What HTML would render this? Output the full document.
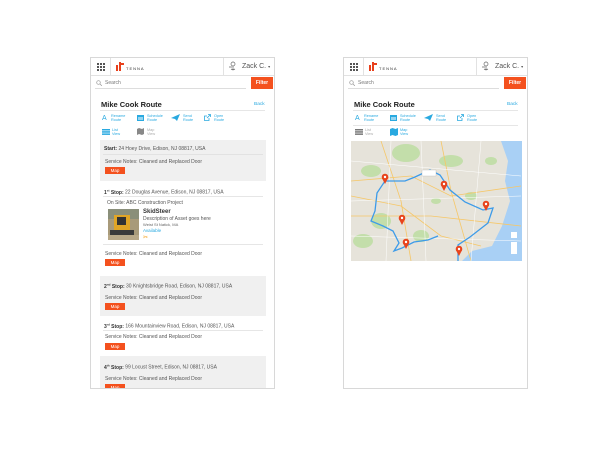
<!DOCTYPE html><html><head><style>
*{margin:0;padding:0;box-sizing:border-box}
body{width:600px;height:450px;background:#fff;position:relative;overflow:hidden;font-family:"Liberation Sans",sans-serif;color:#444}
.ph{position:absolute;top:57px;width:185px;height:332px;border:1px solid #d8d8d8;overflow:hidden;background:#fff}
.a{position:absolute;white-space:nowrap}
.hd{position:absolute;left:0;top:0;width:183px;height:18px;border-bottom:1px solid #e2e2e2}
.vl{position:absolute;top:0;width:1px;height:18px;background:#e2e2e2}
.t{font-size:5px;color:#555}
.b{font-weight:bold;color:#333}
.btn{position:absolute;width:20px;height:7px;background:#f4511e;color:#fff;font-size:4.5px;text-align:center;line-height:7px}
.gb{position:absolute;background:#f0f0f0}
.ln{position:absolute;height:1px;background:#e6e6e6}
.ic{position:absolute;font-size:3.8px;color:#29a9e0;line-height:4.3px}
</style></head><body>

<!-- LEFT -->
<div class="ph" style="left:90px">
 <div class="hd">
  <svg class="a" style="left:6px;top:5px" width="8" height="8"><g fill="#555"><rect x="0" y="0" width="2" height="2"/><rect x="3" y="0" width="2" height="2"/><rect x="6" y="0" width="2" height="2"/><rect x="0" y="3" width="2" height="2"/><rect x="3" y="3" width="2" height="2"/><rect x="6" y="3" width="2" height="2"/><rect x="0" y="6" width="2" height="2"/><rect x="3" y="6" width="2" height="2"/><rect x="6" y="6" width="2" height="2"/></g></svg>
  <div class="vl" style="left:19px"></div>
  <svg class="a" style="left:25px;top:4px" width="9" height="9"><rect x="0" y="3" width="2" height="6" fill="#e8401c"/><path d="M3 0h2v9h-2z" fill="#e8401c"/><path d="M5 1h3v2h-3z" fill="#e8401c"/></svg>
  <div class="a" style="left:35px;top:8px;font-size:4px;letter-spacing:1px;color:#333">TENNA</div>
  <div class="vl" style="left:132px"></div>
  <svg class="a" style="left:137px;top:3px" width="9" height="11"><circle cx="5" cy="3" r="2" fill="none" stroke="#666" stroke-width=".7"/><path d="M5 5v4M3 8l2 1 2-1M1 6h3" stroke="#666" stroke-width=".7" fill="none"/></svg>
  <div class="a" style="left:151px;top:5px;font-size:7px;color:#555">Zack C. <span style="font-size:4px">▾</span></div>
 </div>
 <svg class="a" style="left:5px;top:22px" width="6" height="6"><circle cx="2.5" cy="2.5" r="1.8" fill="none" stroke="#999" stroke-width=".7"/><path d="M4 4l2 2" stroke="#999" stroke-width=".7"/></svg>
 <div class="a t" style="left:14px;top:22px;color:#777">Search</div>
 <div class="ln" style="left:4px;top:30px;width:151px;background:#ddd"></div>
 <div class="a" style="left:160px;top:19px;width:22px;height:12px;background:#f4511e;color:#fff;font-size:5px;font-weight:bold;text-align:center;line-height:12px">Filter</div>

 <div class="a" style="left:10px;top:42px;font-size:7.5px;font-weight:bold;color:#222">Mike Cook Route</div>
 <div class="a" style="left:163px;top:44px;font-size:4.8px;color:#29a9e0">Back</div>
 <div class="ln" style="left:9px;top:52px;width:165px"></div>
 <div class="a" style="left:11px;top:57px;font-size:7px;color:#29a9e0">A</div><div class="ic" style="left:20px;top:56px">Rename<br>Route</div>
 <svg class="a" style="left:46px;top:56px" width="7" height="7"><rect x="0" y="1" width="7" height="6" fill="#29a9e0"/><rect x="1" y="3" width="5" height="3" fill="#fff" opacity=".5"/></svg><div class="ic" style="left:56px;top:56px">Schedule<br>Route</div>
 <svg class="a" style="left:80px;top:56px" width="9" height="7"><path d="M0 4l9-4-3 7-2-2z" fill="#29a9e0"/></svg><div class="ic" style="left:92px;top:56px">Send<br>Route</div>
 <svg class="a" style="left:113px;top:56px" width="7" height="7"><path d="M4 .5h2.5V3M6.5.5L3 4M5 4v2.5H.5V2H3" fill="none" stroke="#29a9e0" stroke-width=".8"/></svg><div class="ic" style="left:123px;top:56px">Open<br>Route</div>
 <svg class="a" style="left:11px;top:71px" width="8" height="6"><g fill="#29a9e0"><rect y="0" width="8" height="1.5"/><rect y="2.2" width="8" height="1.5"/><rect y="4.4" width="8" height="1.5"/></g></svg><div class="ic" style="left:21px;top:70px">List<br>View</div>
 <svg class="a" style="left:46px;top:70px" width="7" height="7"><path d="M0 1l2-1 3 1 2-1v6l-2 1-3-1-2 1z" fill="#888"/></svg><div class="ic" style="left:56px;top:70px;color:#aaa">Map<br>View</div>

 <div class="gb" style="left:9px;top:82px;width:166px;height:41px"></div>
 <div class="a t" style="left:13px;top:88px"><span class="b">Start:</span> 24 Hoey Drive, Edison, NJ 08817, USA</div>
 <div class="ln" style="left:12px;top:96px;width:160px;background:#e2e2e2"></div>
 <div class="a t" style="left:14px;top:101px">Service Notes: Cleaned and Replaced Door</div>
 <div class="btn" style="left:14px;top:109px">Map</div>

 <div class="a t" style="left:13px;top:130px"><span class="b">1<sup style="font-size:3px">st</sup> Stop:</span> 22 Douglas Avenue, Edison, NJ 08817, USA</div>
 <div class="ln" style="left:12px;top:138px;width:160px"></div>
 <div class="a t" style="left:16px;top:142px">On Site: ABC Construction Project</div>
 <svg class="a" style="left:17px;top:151px" width="31" height="31"><rect width="31" height="31" fill="#a89a7a"/><rect x="0" y="0" width="31" height="10" fill="#8a8f7a"/><rect x="6" y="6" width="16" height="15" fill="#e0a526"/><rect x="9" y="8" width="9" height="8" fill="#333"/><rect x="2" y="21" width="24" height="5" fill="#3a3a3a"/><rect x="0" y="26" width="31" height="5" fill="#b8a888"/></svg>
 <div class="a" style="left:52px;top:151px;font-size:6px;font-weight:bold;color:#333">SkidSteer</div>
 <div class="a t" style="left:52px;top:158px">Description of Asset goes here</div>
 <div class="a" style="left:52px;top:164px;font-size:4px;color:#666">Weist St Natick, MA</div>
 <div class="a" style="left:52px;top:170px;font-size:4.5px;color:#29a9e0">Available</div>
 <div class="a" style="left:52px;top:176px;font-size:6px;color:#f39c12">✂</div>
 <div class="ln" style="left:12px;top:186px;width:160px"></div>
 <div class="a t" style="left:14px;top:193px">Service Notes: Cleaned and Replaced Door</div>
 <div class="btn" style="left:14px;top:201px">Map</div>

 <div class="gb" style="left:9px;top:218px;width:166px;height:40px"></div>
 <div class="a t" style="left:13px;top:224px"><span class="b">2<sup style="font-size:3px">nd</sup> Stop:</span> 30 Knightsbridge Road, Edison, NJ 08817, USA</div>
 <div class="a t" style="left:14px;top:237px">Service Notes: Cleaned and Replaced Door</div>
 <div class="btn" style="left:14px;top:245px">Map</div>

 <div class="a t" style="left:13px;top:264px"><span class="b">3<sup style="font-size:3px">rd</sup> Stop:</span> 166 Mountainview Road, Edison, NJ 08817, USA</div>
 <div class="ln" style="left:12px;top:272px;width:160px"></div>
 <div class="a t" style="left:14px;top:276px">Service Notes: Cleaned and Replaced Door</div>
 <div class="btn" style="left:14px;top:285px">Map</div>

 <div class="gb" style="left:9px;top:298px;width:166px;height:40px"></div>
 <div class="a t" style="left:13px;top:305px"><span class="b">4<sup style="font-size:3px">th</sup> Stop:</span> 99 Locust Street, Edison, NJ 08817, USA</div>
 <div class="a t" style="left:14px;top:318px">Service Notes: Cleaned and Replaced Door</div>
 <div class="btn" style="left:14px;top:326px">Map</div>
</div>

<!-- RIGHT -->
<div class="ph" style="left:343px">
 <div class="hd">
  <svg class="a" style="left:6px;top:5px" width="8" height="8"><g fill="#555"><rect x="0" y="0" width="2" height="2"/><rect x="3" y="0" width="2" height="2"/><rect x="6" y="0" width="2" height="2"/><rect x="0" y="3" width="2" height="2"/><rect x="3" y="3" width="2" height="2"/><rect x="6" y="3" width="2" height="2"/><rect x="0" y="6" width="2" height="2"/><rect x="3" y="6" width="2" height="2"/><rect x="6" y="6" width="2" height="2"/></g></svg>
  <div class="vl" style="left:19px"></div>
  <svg class="a" style="left:25px;top:4px" width="9" height="9"><rect x="0" y="3" width="2" height="6" fill="#e8401c"/><path d="M3 0h2v9h-2z" fill="#e8401c"/><path d="M5 1h3v2h-3z" fill="#e8401c"/></svg>
  <div class="a" style="left:35px;top:8px;font-size:4px;letter-spacing:1px;color:#333">TENNA</div>
  <div class="vl" style="left:132px"></div>
  <svg class="a" style="left:137px;top:3px" width="9" height="11"><circle cx="5" cy="3" r="2" fill="none" stroke="#666" stroke-width=".7"/><path d="M5 5v4M3 8l2 1 2-1M1 6h3" stroke="#666" stroke-width=".7" fill="none"/></svg>
  <div class="a" style="left:151px;top:5px;font-size:7px;color:#555">Zack C. <span style="font-size:4px">▾</span></div>
 </div>
 <svg class="a" style="left:5px;top:22px" width="6" height="6"><circle cx="2.5" cy="2.5" r="1.8" fill="none" stroke="#999" stroke-width=".7"/><path d="M4 4l2 2" stroke="#999" stroke-width=".7"/></svg>
 <div class="a t" style="left:14px;top:22px;color:#777">Search</div>
 <div class="ln" style="left:4px;top:30px;width:151px;background:#ddd"></div>
 <div class="a" style="left:160px;top:19px;width:22px;height:12px;background:#f4511e;color:#fff;font-size:5px;font-weight:bold;text-align:center;line-height:12px">Filter</div>

 <div class="a" style="left:10px;top:42px;font-size:7.5px;font-weight:bold;color:#222">Mike Cook Route</div>
 <div class="a" style="left:163px;top:44px;font-size:4.8px;color:#29a9e0">Back</div>
 <div class="ln" style="left:9px;top:52px;width:165px"></div>
 <div class="a" style="left:11px;top:57px;font-size:7px;color:#29a9e0">A</div><div class="ic" style="left:20px;top:56px">Rename<br>Route</div>
 <svg class="a" style="left:46px;top:56px" width="7" height="7"><rect x="0" y="1" width="7" height="6" fill="#29a9e0"/><rect x="1" y="3" width="5" height="3" fill="#fff" opacity=".5"/></svg><div class="ic" style="left:56px;top:56px">Schedule<br>Route</div>
 <svg class="a" style="left:80px;top:56px" width="9" height="7"><path d="M0 4l9-4-3 7-2-2z" fill="#29a9e0"/></svg><div class="ic" style="left:92px;top:56px">Send<br>Route</div>
 <svg class="a" style="left:113px;top:56px" width="7" height="7"><path d="M4 .5h2.5V3M6.5.5L3 4M5 4v2.5H.5V2H3" fill="none" stroke="#29a9e0" stroke-width=".8"/></svg><div class="ic" style="left:123px;top:56px">Open<br>Route</div>
 <div class="ln" style="left:9px;top:67px;width:165px"></div>
 <svg class="a" style="left:11px;top:71px" width="8" height="6"><g fill="#777"><rect y="0" width="8" height="1.5"/><rect y="2.2" width="8" height="1.5"/><rect y="4.4" width="8" height="1.5"/></g></svg><div class="ic" style="left:21px;top:70px;color:#aaa">List<br>View</div>
 <svg class="a" style="left:46px;top:70px" width="8" height="8"><path d="M0 1l2.5-1 3 1 2.5-1v7l-2.5 1-3-1-2.5 1z" fill="#29a9e0"/></svg><div class="ic" style="left:56px;top:70px">Map<br>View</div>

 <svg class="a" style="left:7px;top:83px" width="171" height="120" viewBox="0 0 171 120">
  <rect width="171" height="120" fill="#e6e3da"/>
  <g fill="#c3deaa"><ellipse cx="55" cy="12" rx="14" ry="9"/><ellipse cx="20" cy="30" rx="10" ry="6"/><ellipse cx="100" cy="20" rx="12" ry="6"/><ellipse cx="30" cy="80" rx="10" ry="8"/><ellipse cx="70" cy="95" rx="8" ry="6"/><ellipse cx="120" cy="55" rx="6" ry="4"/><ellipse cx="12" cy="100" rx="10" ry="7"/><ellipse cx="85" cy="60" rx="5" ry="3"/><ellipse cx="140" cy="20" rx="6" ry="4"/></g>
  <path d="M150 0h21v120h-60l10-10 20-5 10-20 8-25-5-20 3-20z" fill="#a9d0f5"/>
  <path d="M135 110q15-8 36-12v22h-40z" fill="#a9d0f5"/>
  <g stroke="#f6c768" stroke-width=".8" fill="none"><path d="M0 40l60-5 40 20 70-10"/><path d="M30 0l20 60 10 60"/><path d="M90 0l10 50 20 70"/><path d="M0 75l80 0 90 10"/><path d="M0 55l50 10 40 30 40 10"/></g>
  <g stroke="#fff" stroke-width=".5" fill="none"><path d="M0 20l170 15M0 60l170-5M0 95l170 5M40 0l-5 120M130 0l-10 120M70 0l5 120"/></g>
  <path d="M34 40l20 0 10-4 15-7 10 5 10 15 15 12 18 8 10-2-5 15-18 14-12 8v15 12M34 40l-8 12-2 18-4 10 12 5 10 5 6 12-5 8 8-3 12-6 14-2 10-4" stroke="#3d9be9" stroke-width="1.3" fill="none"/>
  <rect x="71" y="29" width="14" height="6" fill="#fff" stroke="#aaa" stroke-width=".3"/>
  <defs><g id="p"><circle cx="0" cy="0" r="3.3" fill="#e8441c"/><path d="M-3 1.2L0 7 3 1.2z" fill="#e8441c"/><circle r="1.2" fill="#fff"/></g></defs>
  <use href="#p" x="34" y="36"/><use href="#p" x="93" y="43"/><use href="#p" x="135" y="63"/><use href="#p" x="51" y="77"/><use href="#p" x="55" y="101"/><use href="#p" x="108" y="108"/>
  <rect x="160" y="91" width="6" height="6" fill="#fff"/><rect x="160" y="101" width="6" height="12" fill="#fff"/>
 </svg>
</div>
</body></html>
